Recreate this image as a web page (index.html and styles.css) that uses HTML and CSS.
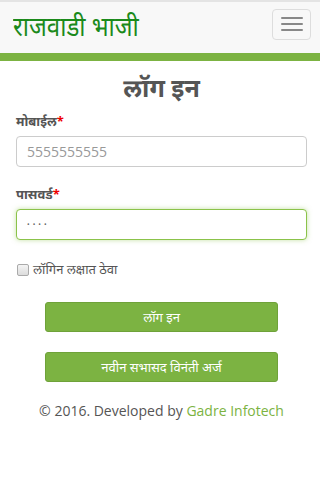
FILE: index.html
```html
<!DOCTYPE html>
<html lang="mr">
<head>
<meta charset="utf-8">
<link rel="stylesheet" href="styles.css">
</head>
<body>
<header class="navbar">
  <a class="brand" href="#">राजवाडी भाजी</a>
  <button class="toggle" type="button" aria-label="menu">
    <span class="bar"></span><span class="bar"></span><span class="bar"></span>
  </button>
</header>
<div class="strip"></div>
<main class="page">
  <h1 class="title">लॉग इन</h1>
  <form class="form">
    <label class="label">मोबाईल<span class="req">*</span></label>
    <input class="field" type="text" placeholder="5555555555">
    <label class="label label-2">पासवर्ड<span class="req">*</span></label>
    <input class="field field-focus" type="password" value="1234">
    <label class="remember"><input class="check" type="checkbox"><span>लॉगिन लक्षात ठेवा</span></label>
    <div class="actions">
      <button class="btn" type="button">लॉग इन</button>
      <button class="btn" type="button">नवीन सभासद विनंती अर्ज</button>
    </div>
  </form>
  <p class="footer">© 2016. Developed by <a href="#">Gadre Infotech</a></p>
</main>
</body>
</html>
```
FILE: styles.css
```css
* { box-sizing: border-box; }
html, body { margin: 0; padding: 0; background: #fff; }
body {
  font-family: "Open Sans", "Noto Sans Devanagari", "Noto Sans", sans-serif;
  color: #555;
  font-size: 14px;
}
.navbar {
  height: 53px;
  background: #f8f8f8;
  border-top: 2px solid #e4e4e4;
  display: flex;
  align-items: center;
  justify-content: space-between;
  padding: 0 9px 0 13px;
}
.brand {
  color: #1b8a1b;
  font-size: 24px;
  text-decoration: none;
  line-height: 1;
  margin-top: -3px;
  transform: scaleY(1.1);
  transform-origin: left center;
}
.toggle {
  width: 39px;
  height: 31px;
  border: 1px solid #ddd;
  border-radius: 4px;
  background: transparent;
  display: flex;
  flex-direction: column;
  align-items: center;
  justify-content: center;
  gap: 4px;
  padding: 0;
  margin-top: -7px;
}
.bar { display: block; width: 22px; height: 2px; background: #888; border-radius: 1px; }
.strip { height: 8px; background: #7cb342; }
.page { padding: 0 13px 0 16px; }
.title {
  margin: 8px 0 0;
  text-align: center;
  font-size: 25px;
  font-weight: bold;
  color: #555;
  line-height: 36px;
}
.form { display: flex; flex-direction: column; }
.label { font-weight: bold; font-size: 13px; color: #555; margin-top: 6px; line-height: 20px; }
.label-2 { margin-top: 17px; }
.req { color: #e00; }
.field {
  margin-top: 5px;
  height: 31px;
  border: 1px solid #ccc;
  border-radius: 4px;
  padding: 0 10px;
  font-family: "Open Sans", sans-serif;
  font-size: 14px;
  color: #555;
  outline: none;
}
.field::placeholder { color: #999; }
.field-focus {
  border-color: #8bc34a;
  box-shadow: 0 0 5px rgba(139, 195, 74, 0.5);
  font-size: 7px;
  letter-spacing: 3px;
  color: #666;
}
.remember {
  margin-top: 20px;
  display: flex;
  align-items: center;
  gap: 4px;
  font-size: 13px;
  color: #555;
}
.check {
  appearance: none;
  -webkit-appearance: none;
  margin: 0 0 0 1px;
  width: 12px;
  height: 12px;
  border: 1px solid #aaa;
  border-radius: 2px;
  background: linear-gradient(#f4f4f4, #dcdcdc);
}
.actions {
  display: flex;
  flex-direction: column;
  align-items: center;
  gap: 20px;
  margin-top: 23px;
  padding-left: 1px;
  padding-right: 1px;
}
.btn {
  width: 233px;
  height: 30px;
  background: #7cb342;
  border: 1px solid #6fa23a;
  border-radius: 3px;
  color: #fff;
  font-family: "Open Sans", "Noto Sans Devanagari", "Noto Sans", sans-serif;
  font-size: 13px;
}
.footer {
  text-align: center;
  margin: 19px 0 0;
  font-size: 14px;
  color: #555;
}
.footer a { color: #7cb342; text-decoration: none; }
```
